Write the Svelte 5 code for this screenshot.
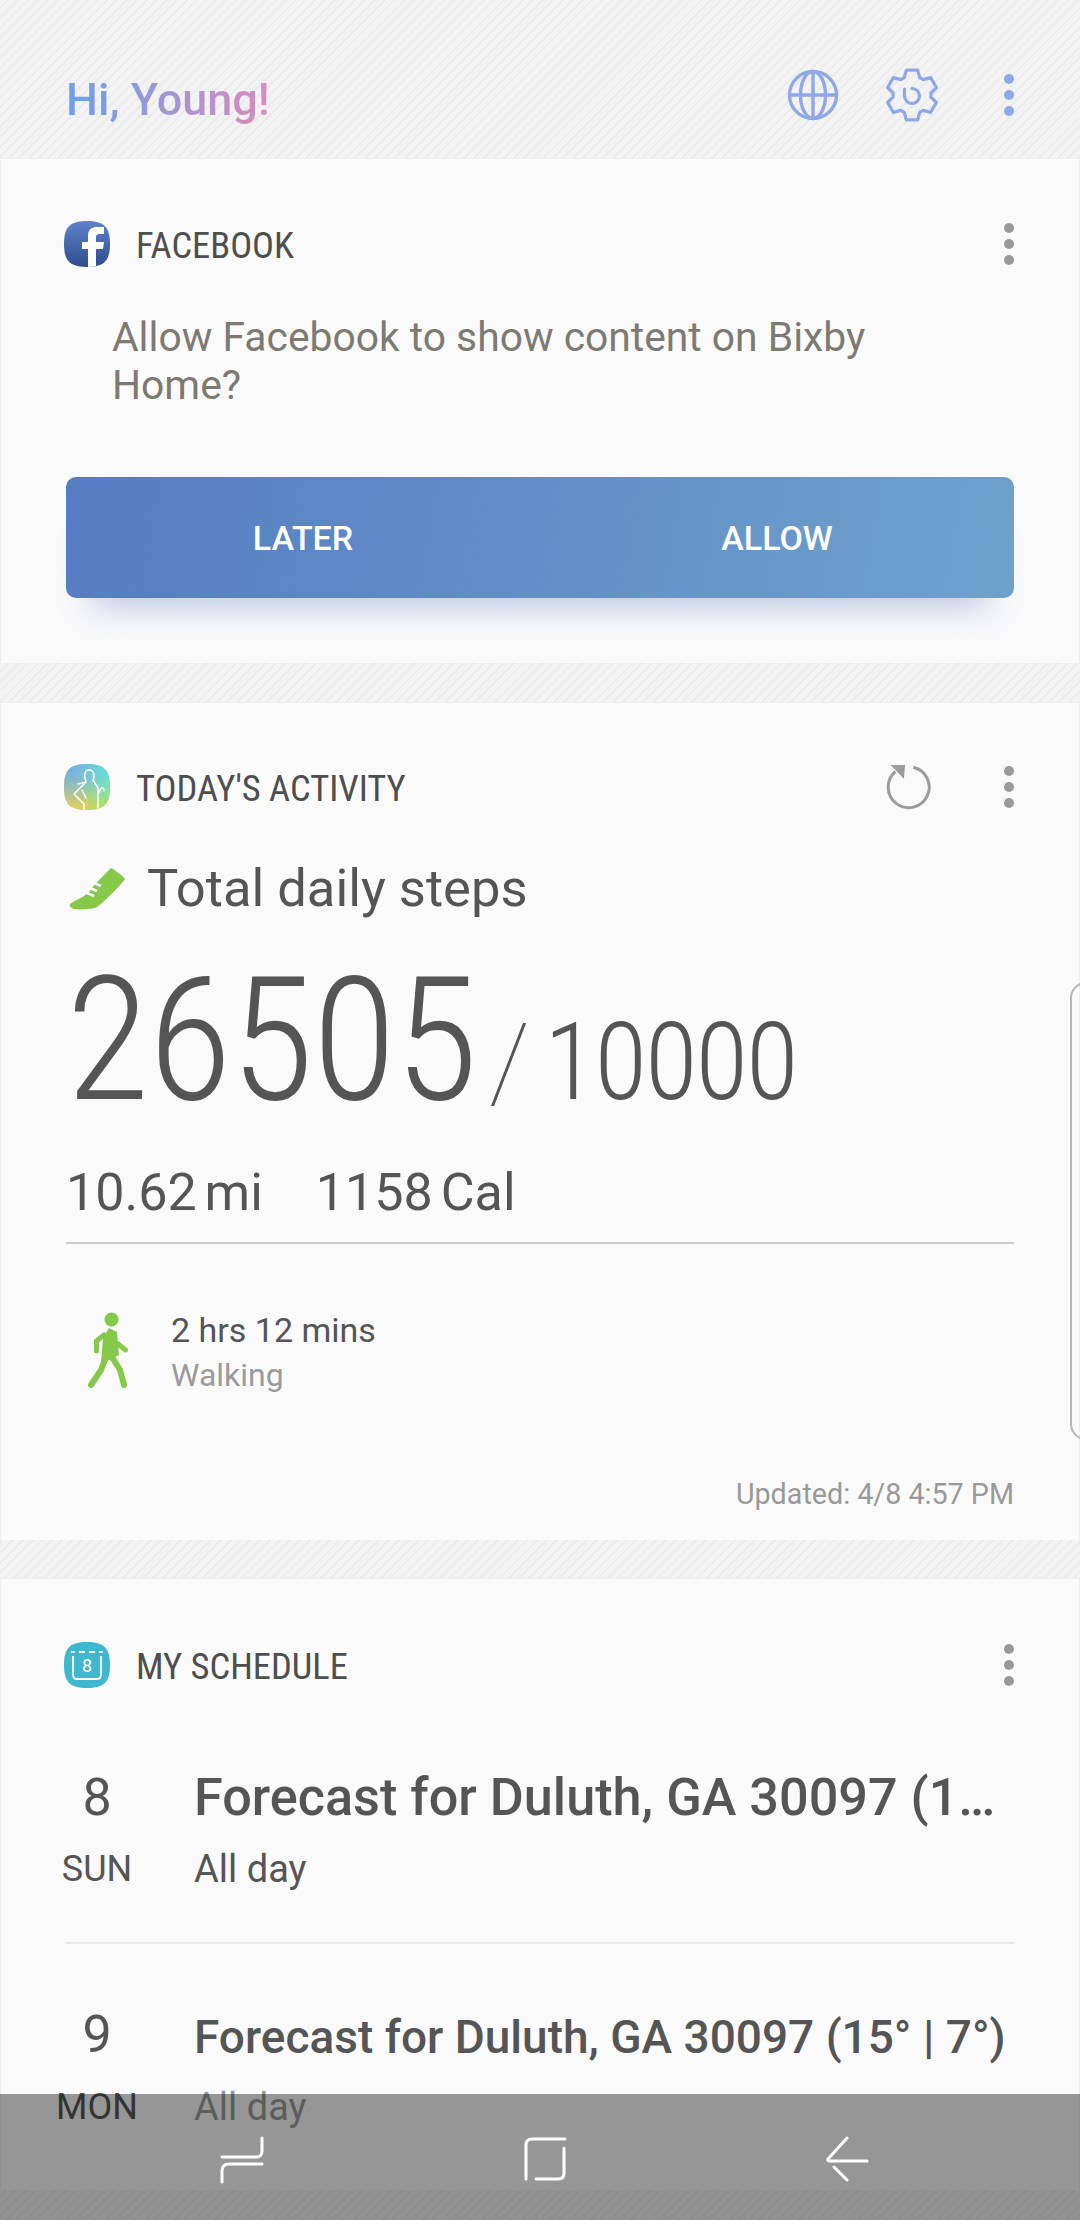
<script>
  // six tooth gear outline for the header icon
  function gearPath(cx, cy, outer, inner) {
    const pts = [];
    for (let k = 0; k < 6; k++) {
      const a = -90 + k * 60;
      for (const [off, r] of [[-24, inner], [-13, outer], [13, outer], [24, inner]]) {
        const rad = ((a + off) * Math.PI) / 180;
        pts.push(`${(cx + r * Math.cos(rad)).toFixed(1)} ${(cy + r * Math.sin(rad)).toFixed(1)}`);
      }
    }
    return "M" + pts.join(" L") + " Z";
  }

  const gear = gearPath(27, 27, 25.5, 19);
</script>

<div class="page">
  <header class="top">
    <h1 class="hello">Hi, Young!</h1>
    <div class="top-icons">
      <svg class="globe" width="52" height="52" viewBox="0 0 52 52" fill="none" stroke="#8fa9e6" stroke-width="3.4">
        <circle cx="26" cy="26" r="23.5" />
        <ellipse cx="26" cy="26" rx="12.5" ry="23.5" />
        <path d="M26 2.5V49.5M2.5 26H49.5" />
      </svg>
      <svg class="gear" width="54" height="54" viewBox="0 0 54 54" fill="none" stroke="#8fa9e6" stroke-width="3.2" stroke-linejoin="round" stroke-linecap="round">
        <path d={gear} />
        <path d="M19.5 21V28A7.5 7.5 0 1 0 27 20.5" />
      </svg>
      <div class="dots blue"><i></i><i></i><i></i></div>
    </div>
  </header>

  <section class="card first">
    <div class="head">
      <div class="squircle fb">
        <svg width="46" height="46" viewBox="0 0 46 46"><path fill="#fff" d="M24 46V28H18V21H24V15C24 8 28 6 33 6H40V13H35.500C33 13 32 14 32 16V21H40L39 28H32V46Z" /></svg>
      </div>
      <span class="label">FACEBOOK</span>
      <div class="dots"><i></i><i></i><i></i></div>
    </div>
    <p class="ask">Allow Facebook to show content on Bixby Home?</p>
    <div class="actions">
      <span>LATER</span>
      <span>ALLOW</span>
    </div>
  </section>

  <section class="card activity">
    <div class="head">
      <div class="squircle health">
        <svg width="46" height="46" viewBox="0 0 46 46" fill="none" stroke="#fff" stroke-width="1.500" stroke-linecap="round" stroke-linejoin="round">
          <path d="M20 46V40L10 30L22 18C20 12 20 6 25 6C30 6 31 12 29 16L34 24V46" />
          <path d="M22 18L14 20M18 26L22 34M34 30C36 28 36 24 38 24C40 24 40 26 40 27" />
        </svg>
      </div>
      <span class="label">TODAY'S ACTIVITY</span>
      <svg class="refresh" width="46" height="48" viewBox="0 0 46 48" fill="none">
        <path d="M27.300 4.200A20.500 20.500 0 1 1 9.500 8.500" stroke="#9c9c9c" stroke-width="3" />
        <path d="M4.700 2H19L18 16Z" fill="#9c9c9c" />
      </svg>
      <div class="dots"><i></i><i></i><i></i></div>
    </div>

    <div class="steps-title">
      <svg width="56" height="43" viewBox="0 0 56 43">
        <path fill="#86c84a" d="M1 37C8 32 16 30 21 24C24 19 30 13 42 1C46 3 52 7 56 12C50 20 36 34 28 40C24 42 12 43 5 42C2 41 0 39 1 37Z" />
        <path stroke="#fafafa" stroke-width="2.500" d="M18 26L25 29M21 21L28 24M25 16L32 19" />
      </svg>
      <span>Total daily steps</span>
    </div>

    <div class="count">
      <span class="big">26505</span>
      <span class="slash">/</span>
      <span class="goal">10000</span>
    </div>

    <div class="stats">
      <span>10.62<small>mi</small></span>
      <span>1158<small>Cal</small></span>
    </div>

    <div class="walk">
      <svg width="40" height="76" viewBox="0 0 40 76" fill="none" stroke="#86c84a" stroke-linecap="round" stroke-linejoin="round">
        <circle cx="23.500" cy="7.500" r="7" fill="#86c84a" stroke="none" />
        <path fill="#86c84a" stroke="none" d="M21 16L29 20L31 43L23 47L13 52L15 26Z" />
        <path stroke-width="5" d="M16 23L8.500 29V39M30 32L37.500 38" />
        <path stroke-width="6" d="M18 45L13 58L3 73M24 45L32 58L36 73" />
      </svg>
      <div class="walk-text">
        <div class="dur">2 hrs 12 mins</div>
        <div class="kind">Walking</div>
      </div>
    </div>

    <div class="updated">Updated: 4/8 4:57 PM</div>
  </section>

  <section class="card schedule">
    <div class="head">
      <div class="squircle cal">
        <svg width="46" height="46" viewBox="0 0 46 46" fill="none" stroke="#fff" stroke-width="1.800">
          <path d="M7 10H11M15 10H21M25 10H31M35 10H39M9 14V32C9 36 10 37 14 37H32C36 37 37 36 37 32V14" />
          <text x="23" y="30" text-anchor="middle" class="cal-day">8</text>
        </svg>
      </div>
      <span class="label">MY SCHEDULE</span>
      <div class="dots"><i></i><i></i><i></i></div>
    </div>

    <div class="day-row one">
      <div class="num">8</div>
      <div class="title">Forecast for Duluth, GA 30097 (1…</div>
      <div class="dow">SUN</div>
      <div class="sub">All day</div>
    </div>
    <div class="rule"></div>
    <div class="day-row two">
      <div class="num">9</div>
      <div class="title">Forecast for Duluth, GA 30097 (15° | 7°)</div>
      <div class="dow">MON</div>
      <div class="sub">All day</div>
    </div>
  </section>

  <div class="edge"></div>

  <nav class="nav">
    <svg width="44" height="48" viewBox="0 0 44 48" fill="none" stroke="#fff" stroke-width="3" stroke-linecap="round">
      <path d="M42 2V15Q42 21 36 21H2M42 28H9Q2 28 2 35V46" />
    </svg>
    <svg width="44" height="46" viewBox="0 0 44 46" fill="none" stroke="#fff" stroke-width="3" stroke-linecap="round">
      <path d="M42 3H9Q3 3 3 9V43M41 12V37Q41 43 35 43H13" />
    </svg>
    <svg width="44" height="46" viewBox="0 0 44 46" fill="none" stroke="#fff" stroke-width="3" stroke-linecap="round" stroke-linejoin="round">
      <path d="M21 2L2 23Q1 25 4 25H41M8 31L21 44" />
    </svg>
  </nav>
</div>

<style>
  :global(body) {
    margin: 0;
  }

  .page {
    position: relative;
    width: 1080px;
    height: 2220px;
    overflow: hidden;
    font-family: Roboto, "Liberation Sans", sans-serif;
    color: #555;
    background: repeating-linear-gradient(135deg, #f3f3f3 0 5px, #ebebeb 5px 7px);
  }

  .top {
    display: flex;
    justify-content: space-between;
    height: 158px;
    box-sizing: border-box;
    padding: 0 66px;
  }

  .hello {
    margin: 70px 0 0;
    font-size: 45px;
    line-height: 60px;
    font-weight: 500;
    background: linear-gradient(90deg, #6c9fec, #d88cbe);
    -webkit-background-clip: text;
    background-clip: text;
    color: transparent;
  }

  .top-icons {
    display: flex;
    align-items: center;
    height: 54px;
    margin-top: 68px;
  }

  .globe {
    margin-right: 46px;
  }

  .gear {
    margin-right: 65px;
  }

  .dots {
    display: flex;
    flex-direction: column;
    gap: 6px;
    width: 10px;
  }

  .dots i {
    width: 10px;
    height: 10px;
    border-radius: 50%;
    background: #999;
  }

  .dots.blue i {
    background: #8fa9e6;
  }

  .card {
    box-sizing: border-box;
    background: #fafafa;
    border: 1px solid #eee;
    border-bottom: 0;
  }

  .first {
    height: 505px;
    padding-top: 62px;
  }

  .activity {
    height: 838px;
    margin-top: 39px;
    padding-top: 61px;
  }

  .schedule {
    height: 612px;
    margin-top: 38px;
    padding-top: 63px;
  }

  .head {
    display: flex;
    align-items: center;
    height: 46px;
    padding: 0 65px 0 63px;
  }

  .squircle {
    width: 46px;
    height: 46px;
    flex: none;
    clip-path: path("M23 0C40 0 46 6 46 23C46 40 40 46 23 46C6 46 0 40 0 23C0 6 6 0 23 0Z");
  }

  .squircle svg {
    display: block;
  }

  .fb {
    background: linear-gradient(180deg, #5f83cb, #2f4c8e);
  }

  .health {
    background:
      radial-gradient(circle at 0 0, #6aa6f0, transparent 70%),
      radial-gradient(circle at 100% 0, #55e0e8, transparent 70%),
      radial-gradient(circle at 0 100%, #f4c84e, transparent 70%),
      radial-gradient(circle at 100% 100%, #a8e44c, transparent 70%),
      #a4d8a8;
  }

  .cal {
    background: #3fb8cf;
  }

  .cal-day {
    fill: #fff;
    stroke: none;
    font-size: 18px;
    font-family: Roboto, sans-serif;
  }

  .label {
    flex: 1;
    margin-left: 26px;
    padding-top: 3px;
    font-size: 36.5px;
    line-height: 46px;
    font-stretch: 75%;
    color: #4e4e4e;
  }

  .refresh {
    margin-right: 72px;
  }

  .ask {
    width: 800px;
    margin: 46px 0 0 111px;
    font-size: 40.8px;
    line-height: 48px;
    color: #7d7a74;
  }

  .actions {
    display: grid;
    grid-template-columns: 1fr 1fr;
    align-items: center;
    height: 121px;
    margin: 68px 65px 0;
    border-radius: 10px;
    background: linear-gradient(100deg, #567cc1, #6ea2cc);
    box-shadow: 0 34px 34px -26px rgba(74, 108, 180, 0.38);
    color: #fff;
    font-size: 34px;
    font-weight: 500;
    text-align: center;
  }

  .steps-title {
    display: flex;
    align-items: center;
    gap: 22px;
    height: 60px;
    margin: 48px 0 0 68px;
    font-size: 52.5px;
    line-height: 60px;
  }

  .count {
    display: flex;
    align-items: baseline;
    margin: 36px 0 0 65px;
    line-height: 1;
    font-weight: 300;
    font-stretch: 75%;
  }

  .big {
    font-size: 172px;
    letter-spacing: -1.5px;
  }

  .slash {
    margin-left: 12px;
    font-size: 108px;
    font-weight: 100;
    font-stretch: 100%;
  }

  .goal {
    margin-left: 14px;
    font-size: 108px;
    letter-spacing: -2px;
  }

  .stats {
    display: flex;
    gap: 53px;
    margin: 37px 65px 0;
    padding-bottom: 19px;
    border-bottom: 2px solid #ccc;
    font-size: 52px;
    line-height: 60px;
  }

  .stats small {
    margin-left: 8px;
    font-size: 52px;
  }

  .walk {
    display: flex;
    gap: 43px;
    margin: 64px 0 0 87px;
  }

  .walk svg {
    margin-top: 4px;
  }

  .dur {
    font-size: 34px;
    line-height: 44px;
  }

  .kind {
    margin-top: 1px;
    font-size: 32px;
    line-height: 44px;
    color: #9a9a9a;
  }

  .updated {
    margin: 79px 65px 0;
    font-size: 28.7px;
    line-height: 36px;
    text-align: right;
    color: #999;
  }

  .day-row {
    display: grid;
    grid-template-columns: 130px minmax(0, 1fr);
    column-gap: 32px;
    row-gap: 14px;
    margin: 0 65px 0 31px;
  }

  .one {
    margin-top: 78px;
    padding-bottom: 48px;
  }

  .rule {
    height: 2px;
    margin: 0 65px;
    background: #e8e8e8;
  }

  .two {
    padding-top: 59px;
    row-gap: 15px;
  }

  .num {
    font-size: 52px;
    line-height: 64px;
    text-align: center;
  }

  .title {
    font-size: 52.2px;
    line-height: 64px;
    font-weight: 500;
    white-space: nowrap;
  }

  .two .title {
    padding-top: 4px;
    font-size: 46px;
    line-height: 60px;
  }

  .dow {
    font-size: 36px;
    line-height: 50px;
    text-align: center;
  }

  .sub {
    font-size: 38px;
    line-height: 50px;
  }

  .two .sub {
    color: #9a9a9a;
  }

  .edge {
    position: absolute;
    top: 982px;
    right: -22px;
    width: 28px;
    height: 454px;
    border: 2px solid #b5b5b5;
    border-radius: 16px;
  }

  .nav {
    position: absolute;
    left: 0;
    right: 0;
    bottom: 0;
    height: 126px;
    box-sizing: border-box;
    display: flex;
    gap: 259px;
    padding: 42px 0 0 220px;
    background: rgba(0, 0, 0, 0.4);
  }
</style>
